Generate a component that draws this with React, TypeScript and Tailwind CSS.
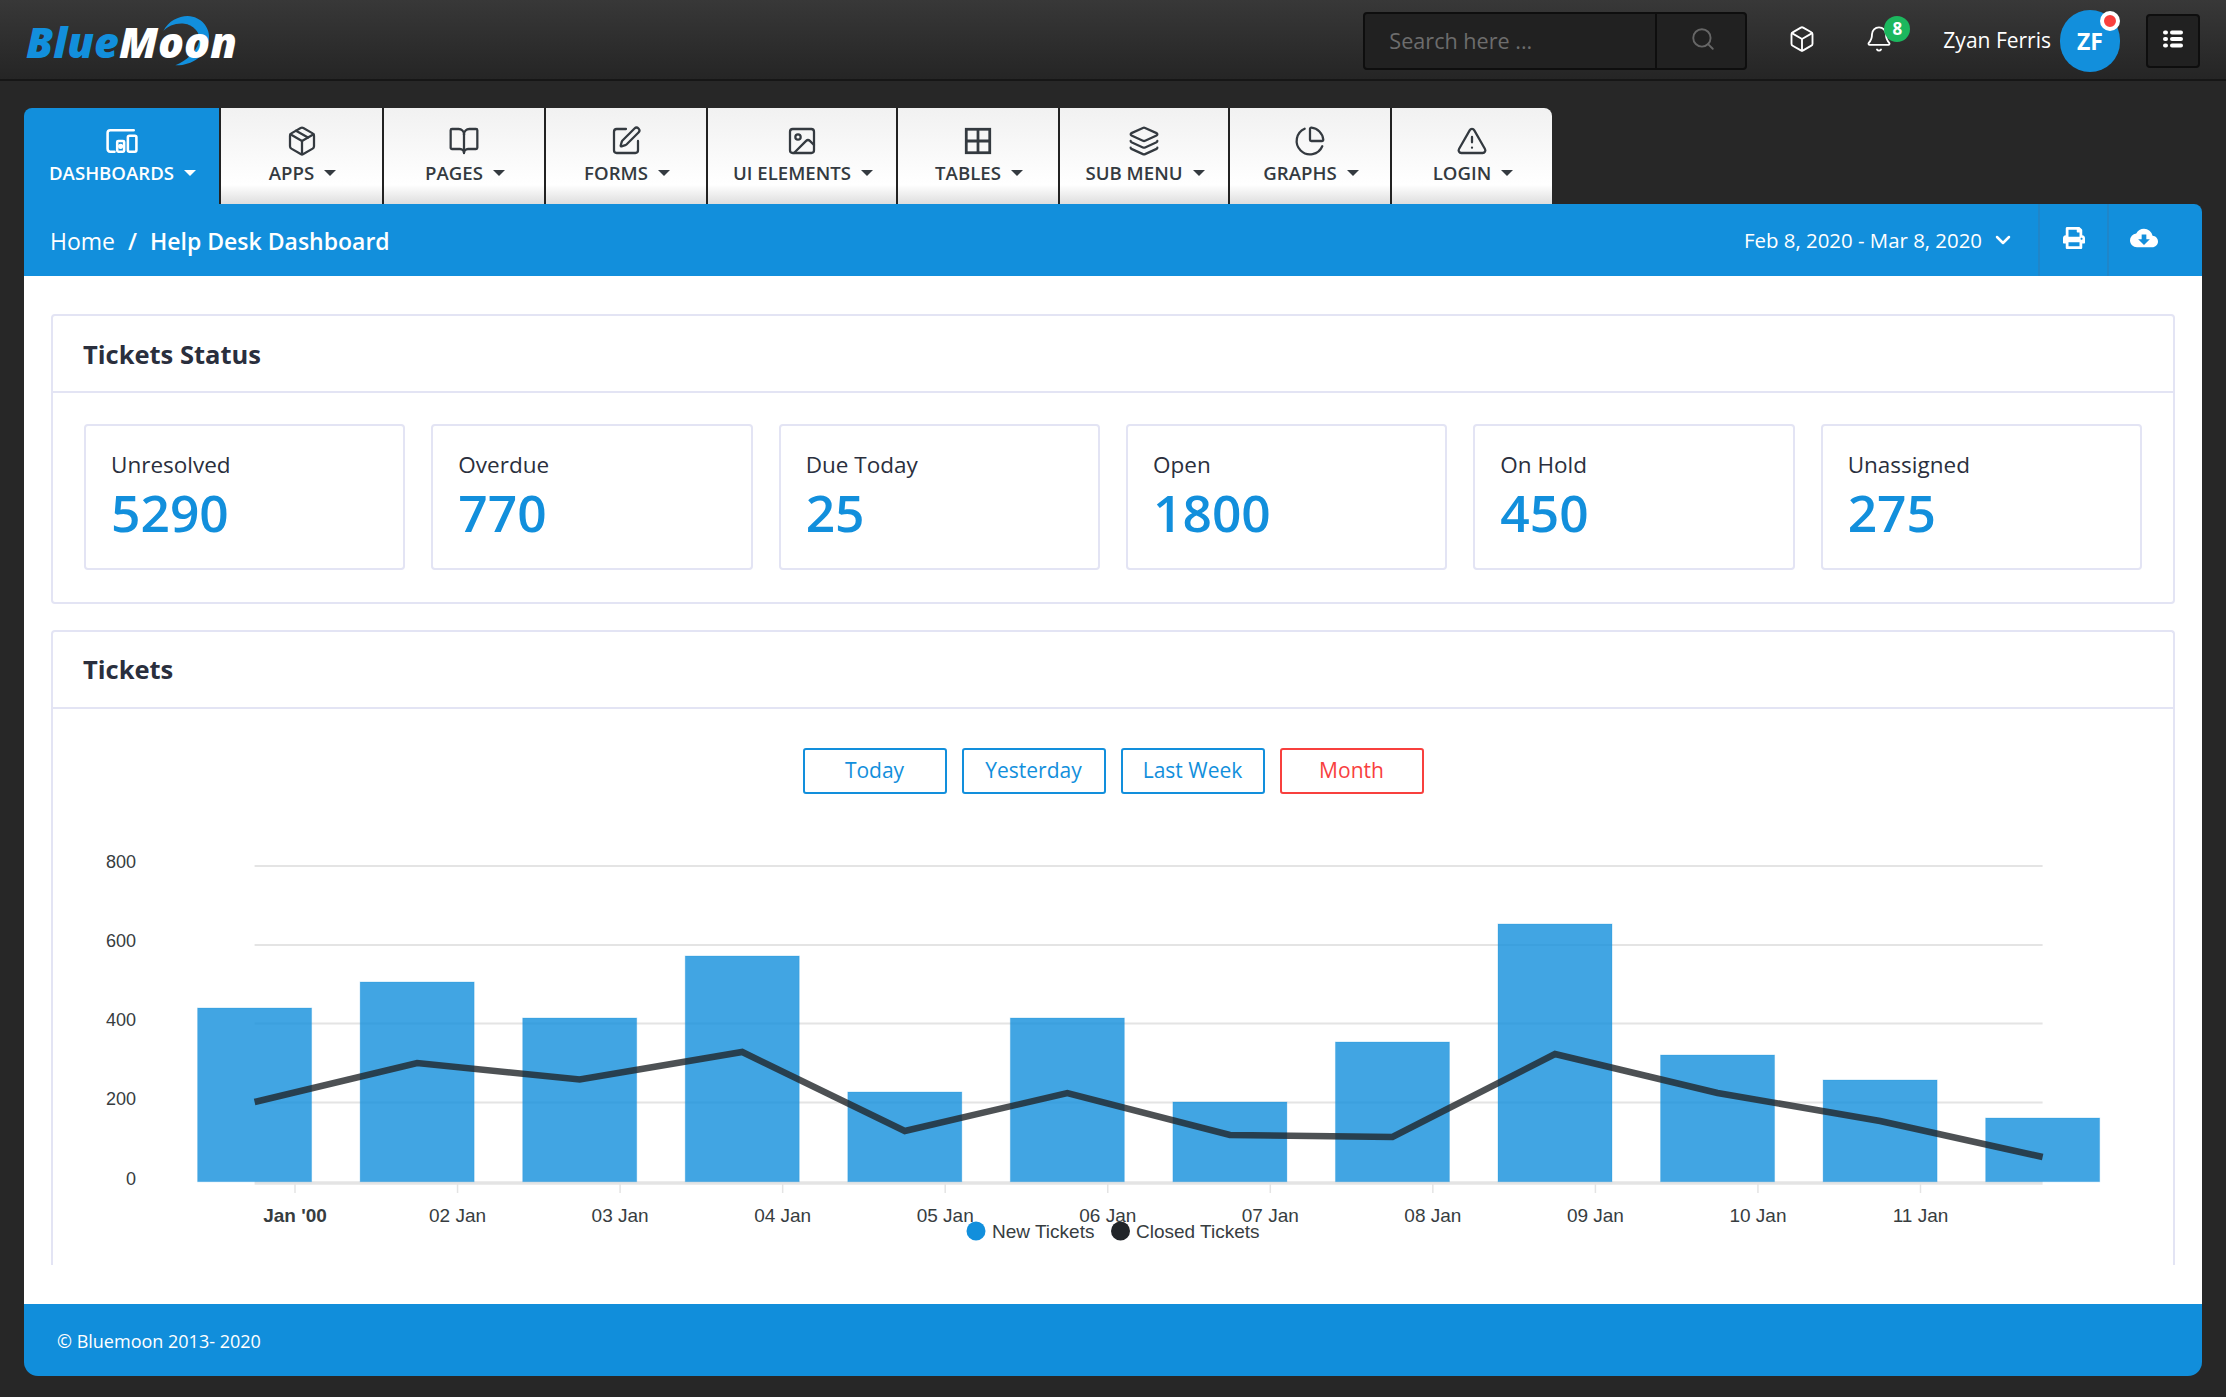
import { Box, Search, Bell, ChevronDown, BookOpen, SquarePen, Image, Layers, ChartPie, TriangleAlert, Package } from 'lucide-react';
import { MdCloudDownload } from 'react-icons/md';
import { FaPrint } from 'react-icons/fa';

const font = { fontFamily: '"Open Sans", sans-serif' };

function DevicesIcon({ className }: { className?: string }) {
  return (
    <svg className={className} viewBox="0 0 30 30" fill="none" stroke="currentColor" strokeWidth="2.4" strokeLinejoin="round" strokeLinecap="round">
      <path d="M26 5 H4 Q1.5 5 1.5 7.5 V22 Q1.5 25 4 25 H8" />
      <rect x="10.5" y="15" width="6.5" height="10" rx="1" />
      <circle cx="13.7" cy="20" r="1.2" />
      <rect x="20.5" y="10" width="8" height="15" rx="1.5" />
    </svg>
  );
}

function TableIcon({ className }: { className?: string }) {
  return (
    <svg className={className} viewBox="0 0 30 30" fill="none" stroke="currentColor" strokeWidth="2.6">
      <rect x="4" y="4" width="22" height="22" />
      <path d="M15 4 V26 M4 15 H26" />
    </svg>
  );
}

const tabs = [
  { label: 'DASHBOARDS', icon: DevicesIcon, width: 'w-[197px]', active: true },
  { label: 'APPS', icon: Package, width: 'w-[163px]' },
  { label: 'PAGES', icon: BookOpen, width: 'w-[162px]' },
  { label: 'FORMS', icon: SquarePen, width: 'w-[162px]' },
  { label: 'UI ELEMENTS', icon: Image, width: 'w-[190px]' },
  { label: 'TABLES', icon: TableIcon, width: 'w-[162px]' },
  { label: 'SUB MENU', icon: Layers, width: 'w-[170px]' },
  { label: 'GRAPHS', icon: ChartPie, width: 'w-[162px]' },
  { label: 'LOGIN', icon: TriangleAlert, width: 'w-[160px]' },
];

const stats = [
  { label: 'Unresolved', value: '5290' },
  { label: 'Overdue', value: '770' },
  { label: 'Due Today', value: '25' },
  { label: 'Open', value: '1800' },
  { label: 'On Hold', value: '450' },
  { label: 'Unassigned', value: '275' },
];

const gridY = [866, 945, 1023.5, 1102.5, 1183];
const yLabels = ['800', '600', '400', '200', '0'];
const xStart = 254.6;
const step = 162.55;
const barTops = [1008, 982, 1018, 956, 1092, 1018, 1102, 1042, 924, 1055, 1080, 1118];
const lineY = [1102, 1063, 1079.5, 1052, 1131, 1093, 1135, 1137, 1054, 1093, 1121, 1157];
const xLabels = ["Jan '00", '02 Jan', '03 Jan', '04 Jan', '05 Jan', '06 Jan', '07 Jan', '08 Jan', '09 Jan', '10 Jan', '11 Jan'];

function Logo() {
  return (
    <div className="relative h-[60px] w-[212px]">
      <svg className="absolute -left-[10px] -top-[5px]" width="230" height="70" viewBox="0 0 690 210">
        <path d="M442 75 C460 40 500 25 530 32 C565 40 585 75 578 105 C570 150 525 180 478 178 C510 165 540 140 550 105 C555 80 530 55 505 53 C480 50 455 60 442 75Z" fill="#128fdc" />
      </svg>
      <div className="absolute left-0 top-[3px] text-[43px] leading-[56px] font-extrabold italic" style={font}>
        <span className="text-[#128fdc]">Blue</span>
        <span className="text-white">Moon</span>
      </div>
    </div>
  );
}

function Header() {
  return (
    <header className="flex h-[81px] items-center justify-between border-b-2 border-[#161616] bg-gradient-to-b from-[#383838] to-[#252525] pt-[3px] pr-[26px] pl-[26px]">
      <Logo />
      <div className="flex items-center">
        <div className="flex h-[58px] w-[384px] rounded border-2 border-[#0e0e0e] bg-[#212121]">
          <div className="flex w-[292px] items-center border-r-2 border-[#0e0e0e] pl-[24px] text-[21.6px] text-[#6d6d6d]">Search here ...</div>
          <div className="flex flex-1 items-center justify-center">
            <Search className="ml-[4px] mb-[4px] h-[26px] w-[26px] text-[#666666]" strokeWidth={1.75} />
          </div>
        </div>
        <Box className="ml-[41px] mb-[4px] h-[28px] w-[28px] text-white" strokeWidth={1.6} />
        <div className="relative ml-[49px] mb-[4px]">
          <Bell className="h-[28px] w-[28px] text-white" strokeWidth={1.6} />
          <span className="absolute -top-[9px] left-[19px] flex h-[26px] w-[26px] items-center justify-center rounded-full bg-[#1cb75e] text-[17px] font-bold text-white">8</span>
        </div>
        <span className="ml-[50px] text-[21px] text-white">Zyan Ferris</span>
        <div className="relative ml-[9px] flex h-[62px] w-[60px] items-center justify-center rounded-full bg-[#128fdc] text-[23px] font-bold text-white">
          ZF
          <span className="absolute top-[1px] right-0 h-[20px] w-[20px] rounded-full border-[4px] border-white bg-[#f8403e]" />
        </div>
        <div className="ml-[26px] flex h-[54px] w-[54px] items-center justify-center rounded border-2 border-[#0e0e0e] bg-[#212121]">
          <svg className="mb-[5px]" width="20" height="18" viewBox="0 0 20 18" fill="#ffffff">
            <rect x="0" y="0.5" width="5" height="4" rx="2" />
            <rect x="7" y="0.5" width="13" height="4" rx="2" />
            <rect x="0" y="7" width="5" height="4" rx="2" />
            <rect x="7" y="7" width="13" height="4" rx="2" />
            <rect x="0" y="13.5" width="5" height="4" rx="2" />
            <rect x="7" y="13.5" width="13" height="4" rx="2" />
          </svg>
        </div>
      </div>
    </header>
  );
}

function Nav() {
  return (
    <nav className="flex w-[1528px] overflow-hidden rounded-t-lg">
      {tabs.map((t) => {
        const Icon = t.icon;
        return (
          <div
            key={t.label}
            className={
              t.width +
              ' flex h-[96px] flex-col items-center border-r-2 border-[#222222] last:border-r-0 ' +
              (t.active ? 'bg-[#128fdc] text-white' : 'bg-gradient-to-b from-[#f1f1f1] via-white via-80% to-[#dedede] text-[#343a40]')
            }
          >
            <Icon className="mt-[17px] h-[32px] w-[32px]" strokeWidth={1.7} />
            <div className="mt-[2px] flex items-center pl-[2px] text-[18.6px] leading-[28px] font-semibold">
              {t.label}
              <span className={'ml-[10px] h-0 w-0 border-x-[6px] border-t-[6px] border-x-transparent ' + (t.active ? 'border-t-white' : 'border-t-[#343a40]')} />
            </div>
          </div>
        );
      })}
    </nav>
  );
}

function Breadcrumb() {
  return (
    <div className="flex h-[72px] items-center justify-between rounded-tr-lg bg-[#128fdc] pl-[26px] text-white">
      <div className="flex items-center pt-[2px] text-[23px]">
        <span>Home</span>
        <span className="mx-[13px] font-semibold">/</span>
        <span className="font-semibold">Help Desk Dashboard</span>
      </div>
      <div className="flex h-full items-center">
        <span className="text-[20.4px]">Feb 8, 2020 - Mar 8, 2020</span>
        <ChevronDown className="ml-[9px] h-6 w-6" strokeWidth={2.5} />
        <div className="ml-[23px] flex h-full w-[69px] items-center justify-center border-l-2 border-[#1f86c9] pb-[4px]">
          <FaPrint className="h-[22px] w-[22px]" />
        </div>
        <div className="flex h-full w-[95px] items-center justify-center border-l-2 border-[#1f86c9] pr-[24px] pb-[4px]">
          <MdCloudDownload className="h-[28px] w-[28px]" />
        </div>
      </div>
    </div>
  );
}

function Chart() {
  return (
    <svg className="block" width="2120" height="435" viewBox="53 830 2120 435">
      {gridY.map((y, i) => (
        <line key={y} x1={254.6} x2={2042.6} y1={y} y2={y} stroke="#e4e4e4" strokeWidth={i === 4 ? 3.5 : 2} />
      ))}
      {xLabels.map((_, i) => (
        <line key={i} x1={295 + i * step} x2={295 + i * step} y1={1183} y2={1193} stroke="#e4e4e4" strokeWidth="1.5" />
      ))}
      {barTops.map((top, i) => (
        <rect key={i} x={xStart + i * step - 57} y={top} width={114} height={1181.7 - top} fill="#128fdc" fillOpacity="0.8" stroke="#128fdc" strokeOpacity="0.25" />
      ))}
      <polyline
        points={lineY.map((y, i) => `${xStart + i * step},${y}`).join(' ')}
        fill="none"
        stroke="#212529"
        strokeOpacity="0.8"
        strokeWidth="6.5"
      />
      {yLabels.map((l, i) => (
        <text key={l} x={136} y={gridY[i] + 2} textAnchor="end" fontSize="18" fill="#373d3f" fontFamily="Liberation Sans, sans-serif">
          {l}
        </text>
      ))}
      {xLabels.map((l, i) => (
        <text key={l} x={295 + i * step} y={1222} textAnchor="middle" fontSize="19" fontWeight={i === 0 ? 700 : 400} fill="#373d3f" fontFamily="Liberation Sans, sans-serif">
          {l}
        </text>
      ))}
      <circle cx={976} cy={1231} r={9.5} fill="#128fdc" />
      <text x={992} y={1237.5} fontSize="19" fill="#373d3f" fontFamily="Liberation Sans, sans-serif">New Tickets</text>
      <circle cx={1120.5} cy={1231} r={9.5} fill="#212529" />
      <text x={1136} y={1237.5} fontSize="19" fill="#373d3f" fontFamily="Liberation Sans, sans-serif">Closed Tickets</text>
    </svg>
  );
}

export default function App() {
  return (
    <div className="min-h-[1397px] bg-[#272727] pb-[21px] text-[#2a2f3d]" style={font}>
      <Header />
      <div className="ml-[24px] w-[2178px] pt-[27px]">
        <Nav />
        <Breadcrumb />
        <div className="bg-white px-[27px] pt-[38px] pb-[39px]">
          {/* Tickets Status */}
          <div className="rounded-sm border-2 border-[#e3e4f4]">
            <div className="flex h-[77px] items-center border-b-2 border-[#e3e4f4] pt-[2px] pl-[30px] text-[25.5px] font-bold text-[#2a2f3d]">Tickets Status</div>
            <div className="grid grid-cols-6 gap-x-[26px] px-[31px] pt-[31px] pb-[32px]">
              {stats.map((s) => (
                <div key={s.label} className="h-[146px] rounded-sm border-2 border-[#e3e4f4] pl-[25px]">
                  <div className="mt-[24px] text-[22.5px] leading-[30px] font-medium">{s.label}</div>
                  <div className="mt-[2px] text-[51.5px] leading-[60px] font-semibold text-[#128fdc]">{s.value}</div>
                </div>
              ))}
            </div>
          </div>

          {/* Tickets */}
          <div className="mt-[26px] h-[635px] overflow-hidden rounded-t-sm border-x-2 border-t-2 border-[#e3e4f4]">
            <div className="flex h-[77px] items-center border-b-2 border-[#e3e4f4] pl-[30px] text-[25.5px] font-bold text-[#2a2f3d]">Tickets</div>
            <div className="flex justify-center gap-[15px] pt-[39px]">
              {['Today', 'Yesterday', 'Last Week'].map((b) => (
                <button key={b} className="h-[46px] w-[144px] rounded-[3px] border-2 border-[#128fdc] text-[21px] text-[#128fdc]">{b}</button>
              ))}
              <button className="h-[46px] w-[144px] rounded-[3px] border-2 border-[#f8403e] text-[21px] text-[#f8403e]">Month</button>
            </div>
            <div className="mt-[36px]">
              <Chart />
            </div>
          </div>
        </div>
        <footer className="flex h-[72px] items-center rounded-b-[14px] bg-[#118edb] pt-[2px] pl-[33px] text-[18px] text-white">© Bluemoon 2013- 2020</footer>
      </div>
    </div>
  );
}
